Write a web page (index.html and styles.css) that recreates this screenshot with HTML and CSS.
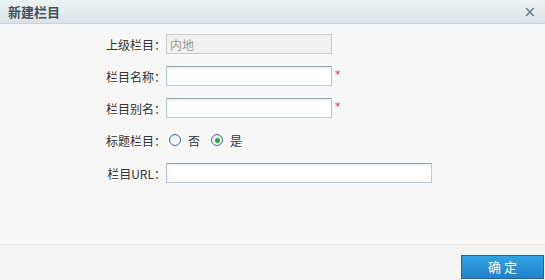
FILE: index.html
```html
<!DOCTYPE html>
<html lang="zh-CN">
<head>
    <meta charset="UTF-8">
    <title>新建栏目</title>
    <link rel="stylesheet" href="styles.css">
</head>
<body>
    <div class="dialog">
        <div class="dialog-header">
            <span class="dialog-title">新建栏目</span>
            <span class="dialog-close">×</span>
        </div>

        <div class="dialog-body">
            <div class="form-row">
                <label class="form-label">上级栏目：</label>
                <input type="text" class="form-input disabled" value="内地" disabled>
            </div>
            <div class="form-row">
                <label class="form-label">栏目名称：</label>
                <input type="text" class="form-input">
                <span class="required">*</span>
            </div>
            <div class="form-row">
                <label class="form-label">栏目别名：</label>
                <input type="text" class="form-input">
                <span class="required">*</span>
            </div>
            <div class="form-row">
                <label class="form-label">标题栏目：</label>
                <label class="radio"><span class="radio-dot"></span>否</label>
                <label class="radio"><span class="radio-dot checked"></span>是</label>
            </div>
            <div class="form-row">
                <label class="form-label">栏目URL：</label>
                <input type="text" class="form-input wide">
            </div>
        </div>

        <div class="dialog-footer">
            <button class="ok-button">确 定</button>
        </div>
    </div>
</body>
</html>
```

FILE: styles.css
```css
* {
    margin: 0;
    padding: 0;
    box-sizing: border-box;
}

body {
    font-family: "Noto Sans CJK SC", "DejaVu Sans", sans-serif;
    font-size: 12px;
    color: #333;
    background: #f8f8f8;
}

.dialog {
    width: 545px;
    height: 280px;
    display: flex;
    flex-direction: column;
}

.dialog-header {
    height: 24px;
    background: linear-gradient(to bottom, #eef3f5 0%, #dbe3e7 100%);
    border-bottom: 1px solid #c9d3d9;
    display: flex;
    align-items: center;
    justify-content: space-between;
    padding: 0 9px 0 8px;
}

.dialog-title {
    font-size: 13px;
    font-weight: bold;
    color: #44515b;
    line-height: 22px;
}

.dialog-close {
    font-family: "DejaVu Sans", sans-serif;
    font-size: 15px;
    color: #5a7a90;
    line-height: 20px;
}

.dialog-body {
    flex: 1;
    padding-top: 10px;
    display: flex;
    flex-direction: column;
    gap: 12px;
}

.form-row {
    height: 20px;
    display: flex;
    align-items: center;
}

.form-row:last-child {
    margin-top: 1px;
}

.form-label {
    width: 166px;
    text-align: right;
    color: #333;
}

.form-input {
    width: 166px;
    height: 20px;
    border: 1px solid #b9c9d9;
    border-top-color: #8fa3b6;
    background: #fff;
    box-shadow: inset 1px 2px 2px rgba(0, 0, 0, 0.06);
    font-family: inherit;
    font-size: 12px;
    padding: 0 3px;
    outline: none;
}

.form-input.disabled {
    background: #f1f1f1;
    border-color: #cccccc;
    box-shadow: none;
    color: #a09a88;
}

.form-input.wide {
    width: 266px;
}

.required {
    color: #e0302a;
    font-family: "DejaVu Sans", sans-serif;
    font-size: 11px;
    margin-left: 3px;
    align-self: flex-start;
    margin-top: 2px;
}

.radio {
    display: flex;
    align-items: center;
    margin-left: 3px;
}

.radio + .radio {
    margin-left: 11px;
}

.radio-dot {
    width: 12px;
    height: 12px;
    margin-right: 7px;
    border: 1px solid #3e6c97;
    border-radius: 50%;
    background: linear-gradient(to bottom, #e8edf2, #ffffff);
    display: flex;
    align-items: center;
    justify-content: center;
}

.radio-dot.checked::after {
    content: "";
    width: 5px;
    height: 5px;
    border-radius: 50%;
    background: #22b031;
}

.dialog-footer {
    height: 36px;
    background: #f4f4f4;
    border-top: 1px solid #e6e6e8;
    display: flex;
    align-items: center;
    justify-content: flex-end;
    padding-right: 1px;
}

.ok-button {
    width: 83px;
    height: 24px;
    margin-top: 8px;
    background: linear-gradient(to bottom, #31a2e2 0%, #2383cb 100%);
    border: 1px solid #1c67a3;
    color: #fff;
    font-family: inherit;
    font-size: 13px;
}
```
